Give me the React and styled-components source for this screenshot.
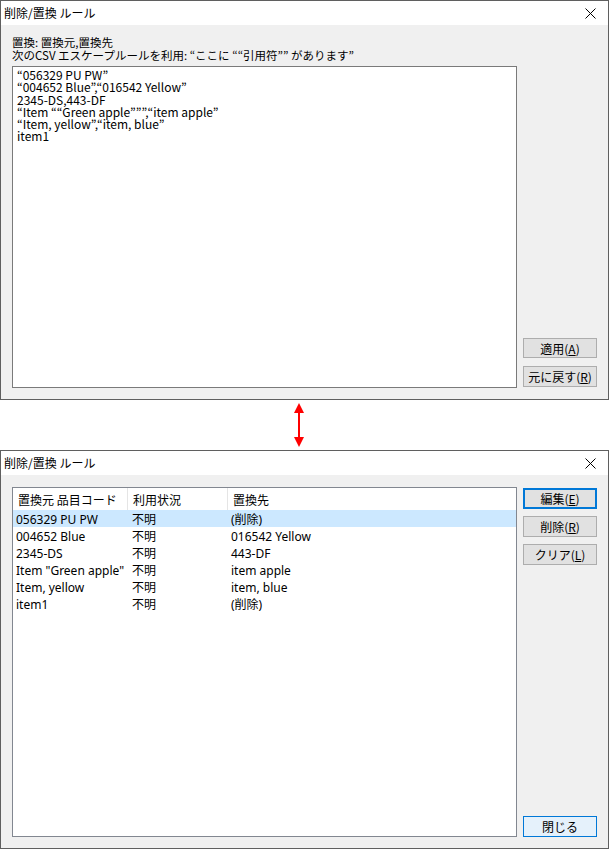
import React from "react";
import styled, { createGlobalStyle } from "styled-components";

const Global = createGlobalStyle`
  html, body { margin: 0; padding: 0; background: #ffffff; }
  body { font-family: "Noto Sans CJK JP", "Noto Sans", sans-serif; font-size: 12px; color: #000; }
`;

const Page = styled.div`
  width: 609px;
  display: flex;
  flex-direction: column;
`;

const Window = styled.div`
  box-sizing: border-box;
  width: 609px;
  height: ${(p) => p.$h}px;
  border: 1px solid #5f5f5f;
  display: flex;
  flex-direction: column;
  background: #f0f0f0;
`;

const TitleBar = styled.div`
  height: 24px;
  flex: none;
  background: #ffffff;
  display: flex;
  align-items: center;
  justify-content: space-between;
  padding: 0 12px 0 3px;
  font-size: 12px;
  line-height: 24px;
`;

const CloseIcon = () => (
  <svg width="11" height="11" viewBox="0 0 11 11">
    <path d="M0.5 0.5 L10.5 10.5 M10.5 0.5 L0.5 10.5" stroke="#000" strokeWidth="1" fill="none" />
  </svg>
);

const Body = styled.div`
  flex: 1;
  display: flex;
  flex-direction: column;
  padding: ${(p) => p.$pad};
  min-height: 0;
`;

const Label = styled.div`
  display: flex;
  flex-direction: column;
  font-size: 11.5px;
  line-height: 12.5px;
  margin-bottom: 5px;
  white-space: nowrap;
`;

const LabelLine = styled.div`
  height: 12.5px;
  overflow: visible;
`;

const MainRow = styled.div`
  flex: 1;
  display: flex;
  gap: 6px;
  min-height: 0;
`;

const TextBox = styled.div`
  box-sizing: border-box;
  width: 505px;
  flex: none;
  background: #ffffff;
  border: 1px solid #7a7a7a;
  padding: 2px 4px;
  font-size: 12px;
  line-height: 12.3px;
  white-space: pre;
`;

const ButtonCol = styled.div`
  flex: 1;
  display: flex;
  flex-direction: column;
  justify-content: ${(p) => (p.$bottom ? "flex-end" : "space-between")};
  gap: 7px;
  padding-top: ${(p) => (p.$top ? "1px" : "0")};
  padding-bottom: ${(p) => (p.$bottom ? "1px" : "0")};
`;

const ButtonGroup = styled.div`
  display: flex;
  flex-direction: column;
  gap: ${(p) => p.$gap || 7}px;
`;

const Button = styled.div`
  box-sizing: border-box;
  width: 74px;
  height: ${(p) => p.$h || 21}px;
  display: flex;
  align-items: center;
  justify-content: center;
  font-size: 12px;
  background: ${(p) => (p.$light ? "#e5f1fb" : "#e1e1e1")};
  border: ${(p) => (p.$focus ? "2px solid #0078d7" : p.$light ? "1px solid #0078d7" : "1px solid #adadad")};
  u { text-decoration: underline; text-underline-offset: 1px; }
`;

const Gap = styled.div`
  height: 50px;
  display: flex;
  justify-content: center;
  align-items: center;
  padding-right: 11px;
`;

const Arrow = () => (
  <svg width="12" height="46" viewBox="0 0 12 46">
    <polygon points="6,1 11,11 1,11" fill="#ff0000" />
    <polygon points="6,45 11,35 1,35" fill="#ff0000" />
    <rect x="5" y="10" width="2" height="26" fill="#ff0000" />
  </svg>
);

const ListBox = styled.div`
  box-sizing: border-box;
  width: 505px;
  flex: none;
  background: #ffffff;
  border: 1px solid #828790;
  display: flex;
  flex-direction: column;
`;

const Row = styled.div`
  display: grid;
  grid-template-columns: 115px 100px 1fr;
  height: ${(p) => (p.$header ? 22 : 17)}px;
  align-items: center;
  background: ${(p) => (p.$sel ? "#cce8ff" : "transparent")};
  font-size: 12px;
  white-space: nowrap;
`;

const HeadCell = styled.div`
  height: 100%;
  display: flex;
  align-items: center;
  padding-left: 5px;
  border-right: ${(p) => (p.$last ? "none" : "1px solid #e5e5e5")};
`;

const Cell = styled.div`
  padding-left: ${(p) => p.$pl}px;
  font-family: "Noto Sans", "Noto Sans CJK JP", sans-serif;
`;

const rows = [
  ["056329 PU PW", "不明", "(削除)", true],
  ["004652 Blue", "不明", "016542 Yellow"],
  ["2345-DS", "不明", "443-DF"],
  ['Item "Green apple"', "不明", "item apple"],
  ["Item, yellow", "不明", "item, blue"],
  ["item1", "不明", "(削除)"],
];

const csv = [
  "“056329 PU PW”",
  "“004652 Blue”,“016542 Yellow”",
  "2345-DS,443-DF",
  "“Item ““Green apple”””,“item apple”",
  "“Item, yellow”,“item, blue”",
  "item1",
].join("\n");

export default function App() {
  return (
    <Page>
      <Global />
      <Window $h={400}>
        <TitleBar>
          <span>削除/置換 ルール</span>
          <CloseIcon />
        </TitleBar>
        <Body $pad="11px 11px 11px 11px">
          <Label>
            <LabelLine>置換: 置換元,置換先</LabelLine>
            <LabelLine>次のCSV エスケープルールを利用: “ここに ““引用符”” があります”</LabelLine>
          </Label>
          <MainRow>
            <TextBox>{csv}</TextBox>
            <ButtonCol $bottom>
              <ButtonGroup $gap={8}>
                <Button $h={20}>適用(<u>A</u>)</Button>
                <Button>元に戻す(<u>R</u>)</Button>
              </ButtonGroup>
            </ButtonCol>
          </MainRow>
        </Body>
      </Window>
      <Gap>
        <Arrow />
      </Gap>
      <Window $h={399}>
        <TitleBar>
          <span>削除/置換 ルール</span>
          <CloseIcon />
        </TitleBar>
        <Body $pad="12px 11px 11px 11px">
          <MainRow>
            <ListBox>
              <Row $header>
                <HeadCell>置換元 品目コード</HeadCell>
                <HeadCell>利用状況</HeadCell>
                <HeadCell $last>置換先</HeadCell>
              </Row>
              {rows.map(([a, b, c, sel], i) => (
                <Row key={i} $sel={sel}>
                  <Cell $pl={3}>{a}</Cell>
                  <Cell $pl={4}>{b}</Cell>
                  <Cell $pl={3}>{c}</Cell>
                </Row>
              ))}
            </ListBox>
            <ButtonCol $top>
              <ButtonGroup>
                <Button $focus>編集(<u>E</u>)</Button>
                <Button>削除(<u>R</u>)</Button>
                <Button>クリア(<u>L</u>)</Button>
              </ButtonGroup>
              <Button $light>閉じる</Button>
            </ButtonCol>
          </MainRow>
        </Body>
      </Window>
    </Page>
  );
}
